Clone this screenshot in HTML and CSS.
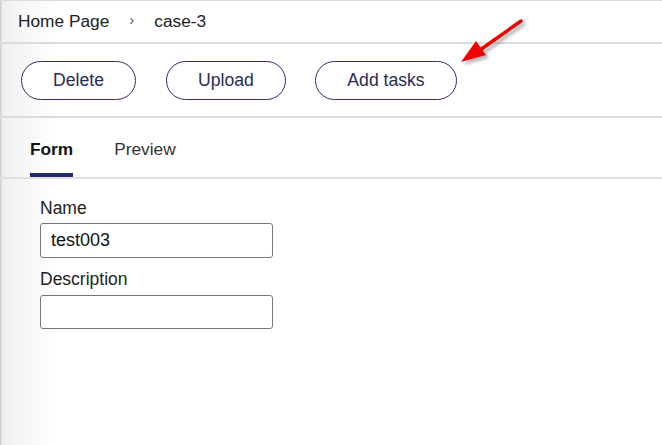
FILE: index.html
```html
<!DOCTYPE html>
<html>
<head>
<meta charset="utf-8">
<link rel="stylesheet" href="styles.css">
</head>
<body>
<div class="page">
  <nav class="crumbs">
    <span class="crumb">Home Page</span>
    <span class="sep">›</span>
    <span class="crumb">case-3</span>
  </nav>
  <div class="actions">
    <button class="pill pill-delete">Delete</button>
    <button class="pill pill-upload">Upload</button>
    <button class="pill pill-add">Add tasks</button>
  </div>
  <div class="tabs">
    <span class="tab active">Form</span>
    <span class="tab">Preview</span>
  </div>
  <form class="form">
    <label class="label">Name</label>
    <input class="field" type="text" value="test003">
    <label class="label label-desc">Description</label>
    <input class="field field-desc" type="text" value="">
  </form>
</div>
<svg class="arrow" width="90" height="70" viewBox="0 0 90 70">
  <defs>
    <filter id="sh" x="-20%" y="-20%" width="140%" height="140%">
      <feGaussianBlur stdDeviation="1.5"/>
    </filter>
  </defs>
  <g transform="translate(3,3)" opacity="0.45" filter="url(#sh)">
    <line x1="71" y1="11" x2="30" y2="40" stroke="#666" stroke-width="3.5" stroke-linecap="round"/>
    <polygon points="11,52 26,31 36,45" fill="#666"/>
  </g>
  <line x1="71" y1="11" x2="30" y2="40" stroke="#f20000" stroke-width="3.5" stroke-linecap="round"/>
  <polygon points="11,52 26,31 36,45" fill="#f20000"/>
</svg>
</body>
</html>
```
FILE: styles.css
```css
html, body {
  margin: 0;
  padding: 0;
}
body {
  width: 662px;
  height: 445px;
  overflow: hidden;
  position: relative;
  font-family: "Liberation Sans", Arial, sans-serif;
  color: #222;
  background: linear-gradient(to right, #cfd0d0 0, #cfd0d0 1px, #eef0f0 2px, #f8f8f8 30px, #ffffff 58px);
}
.page {
  border-top: 1px solid #dcdcdc;
}
.crumbs {
  display: flex;
  align-items: center;
  padding-left: 18px;
  font-size: 17.3px;
  color: #222;
  border-bottom: 2px solid #dcdcdc;
  box-sizing: border-box;
  height: 43px;
}
.sep {
  margin: 0 20px 0 20px;
  font-size: 15px;
  color: #555;
  position: relative;
  top: -2px;
}
.actions {
  display: flex;
  padding: 17px 0 16px 21px;
  border-bottom: 2px solid #dcdcdc;
}
.pill {
  height: 39px;
  box-sizing: border-box;
  border: 1px solid #2d2f6d;
  border-radius: 20px;
  background: #fff;
  font-family: "Liberation Sans", Arial, sans-serif;
  font-size: 17.6px;
  color: #2a2b55;
  padding: 0;
  margin: 0;
}
.pill-delete { width: 115px; }
.pill-upload { width: 120px; margin-left: 30px; }
.pill-add { width: 142px; margin-left: 29px; }
.tabs {
  display: flex;
  padding-left: 30px;
  border-bottom: 2px solid #e0e0e3;
  box-sizing: border-box;
  height: 61px;
}
.tab {
  font-size: 17.3px;
  color: #333;
  padding-top: 21px;
  box-sizing: border-box;
  margin-right: 41px;
}
.tab.active {
  font-weight: bold;
  color: #111;
  border-bottom: 4px solid #232a6b;
}
.form {
  display: flex;
  flex-direction: column;
  align-items: flex-start;
  padding: 20px 0 0 40px;
}
.label {
  font-size: 17.5px;
  color: #222;
  line-height: 19px;
}
.field {
  margin-top: 5px;
  width: 233px;
  height: 35px;
  box-sizing: border-box;
  border: 1px solid #777;
  border-radius: 3px;
  padding: 0 0 0 10px;
  font-family: "Liberation Sans", Arial, sans-serif;
  font-size: 18px;
  color: #111;
  background: #fff;
}
.label-desc {
  margin-top: 12px;
}
.field-desc {
  height: 34px;
  margin-top: 6px;
}
.arrow {
  position: absolute;
  left: 450px;
  top: 10px;
}
```
